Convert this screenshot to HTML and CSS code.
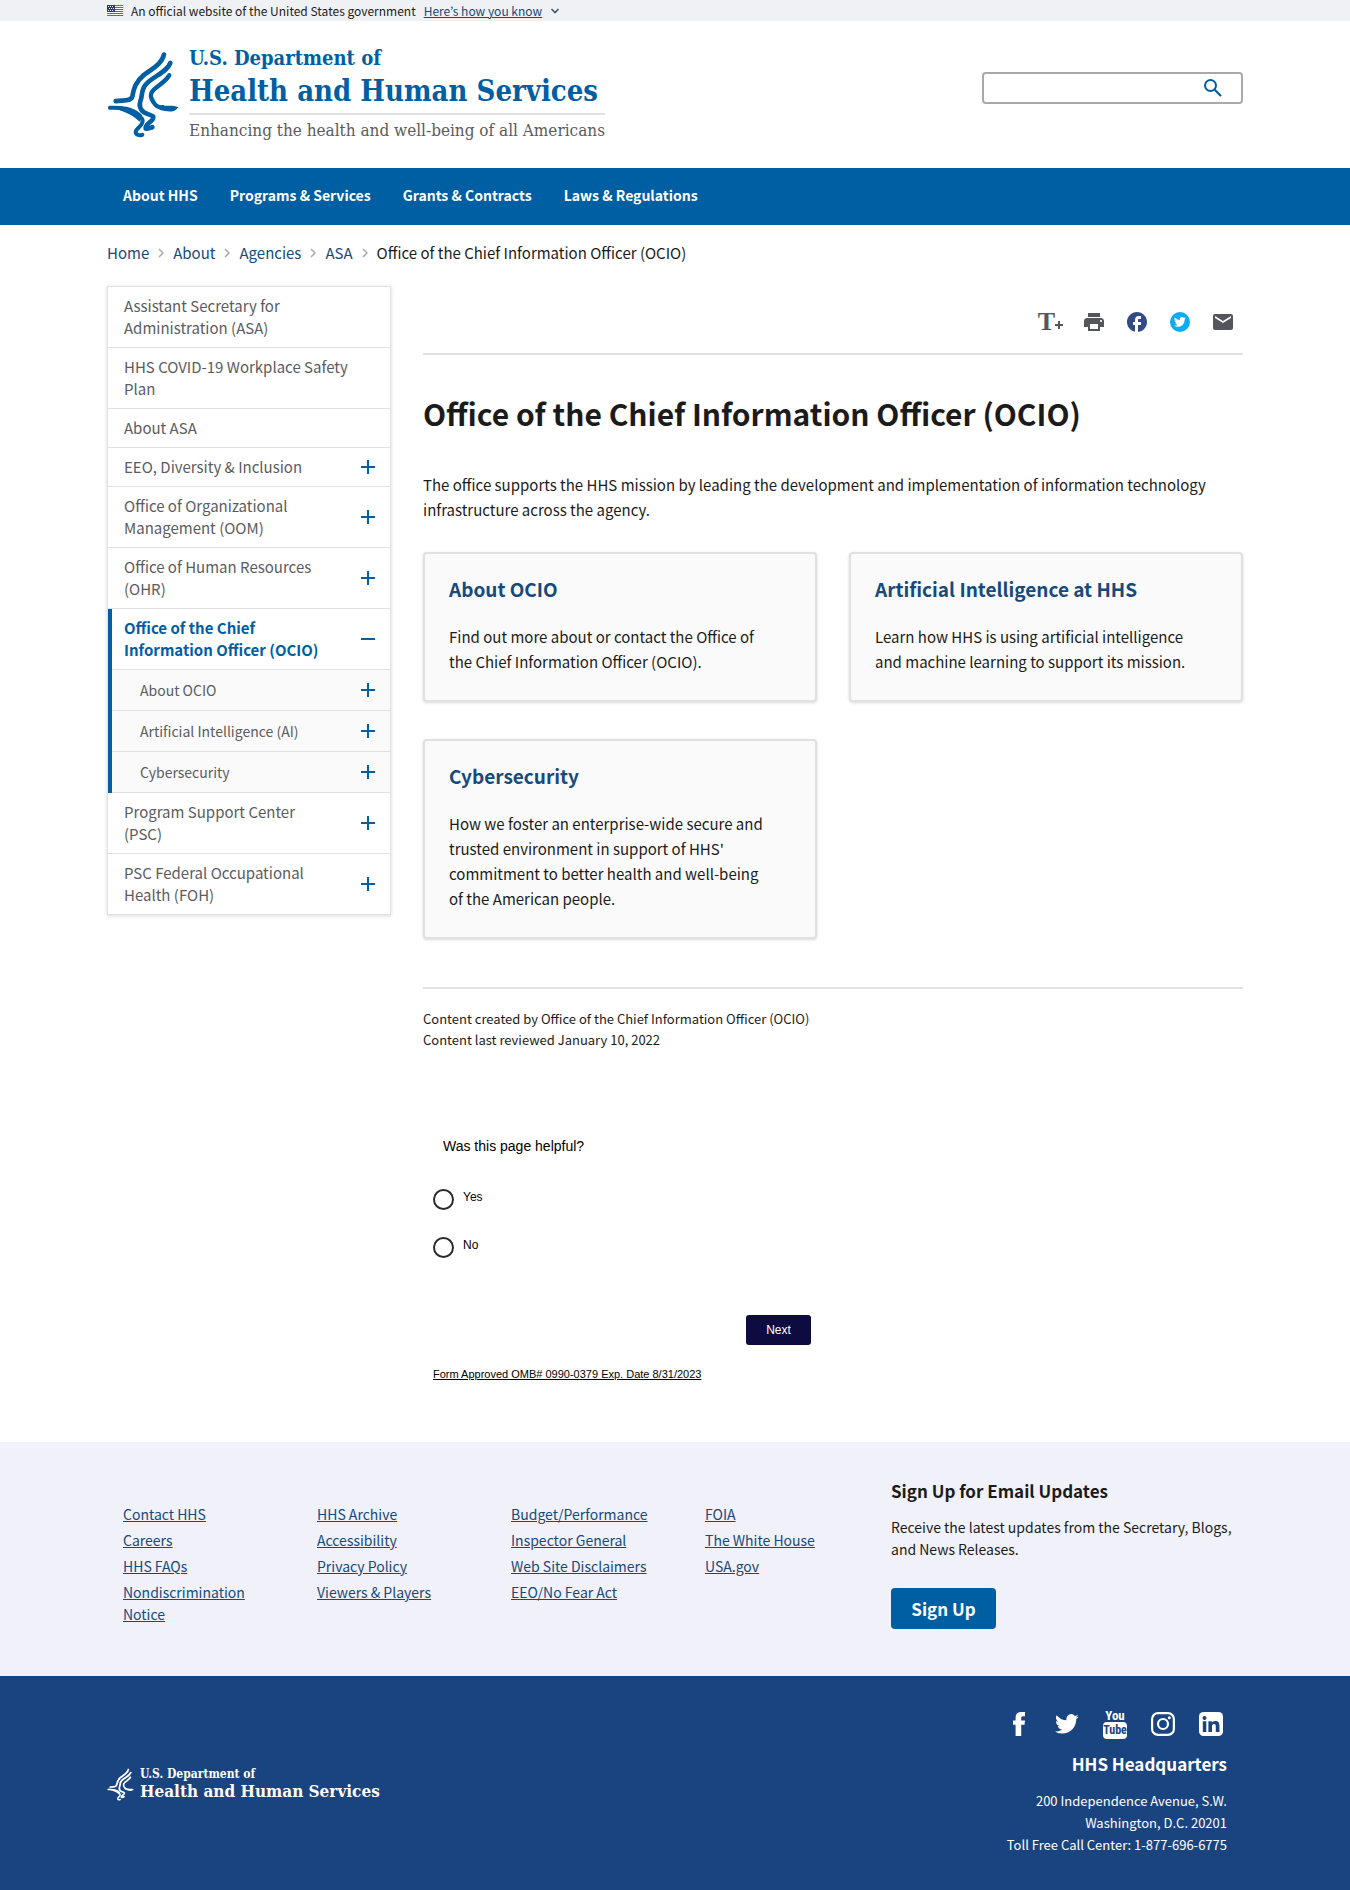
FILE: index.html
```html
<!DOCTYPE html>
<html lang="en">
<head>
<meta charset="utf-8">
<meta name="viewport" content="width=device-width, initial-scale=1">
<title>Office of the Chief Information Officer (OCIO) | HHS.gov</title>
<link rel="stylesheet" href="styles.css">
</head>
<body>
<svg class="defs" aria-hidden="true">
  <symbol id="eagle" viewBox="50 150 216 260">
    <g fill="none" stroke="currentColor" stroke-linecap="round" stroke-linejoin="round">
      <path stroke-width="14" d="M221 160C214 190 186 202 160 222C136 242 130 262 126 286C121 302 100 296 76 300"/>
      <path stroke-width="14" d="M240 185C230 212 196 222 170 246C150 264 158 282 150 300C145 316 150 326 162 334C180 345 196 340 186 356C176 366 164 372 166 382C174 384 180 380 186 378"/>
      <path stroke-width="13" d="M237 222C226 242 206 250 190 266C176 280 182 292 190 304C196 314 206 320 218 318"/>
      <path stroke-width="12" d="M59 320C84 318 110 322 132 336C150 348 160 352 156 364C152 378 138 380 136 392C136 402 148 404 156 401"/>
    </g>
    <path fill="currentColor" d="M208 314C226 316 244 310 264 318C252 336 232 332 208 326Z"/>
    <path fill="currentColor" d="M54 316C90 328 120 334 148 362L156 342C130 316 96 312 54 316Z"/>
  </symbol>
  <symbol id="plus" viewBox="0 0 14 14"><path fill="currentColor" d="M6 0h2v6h6v2H8v6H6V8H0V6h6z"/></symbol>
  <symbol id="minus" viewBox="0 0 14 14"><path fill="currentColor" d="M0 6h14v2H0z"/></symbol>
  <symbol id="chev" viewBox="0 0 6 10"><path fill="none" stroke="currentColor" stroke-width="1.5" d="M1 1l4 4-4 4"/></symbol>
  <symbol id="bird" viewBox="0 0 24 24"><path fill="currentColor" d="M23.6 4.6a9.7 9.7 0 0 1-2.8.8 4.9 4.9 0 0 0 2.1-2.7 9.7 9.7 0 0 1-3 1.2 4.8 4.8 0 0 0-8.3 4.4A13.7 13.7 0 0 1 1.700 3.200a4.800 4.800 0 0 0 1.500 6.500 4.800 4.800 0 0 1-2.200-.6v.1a4.800 4.800 0 0 0 3.900 4.700 4.800 4.800 0 0 1-2.200.1 4.800 4.800 0 0 0 4.500 3.400A9.700 9.700 0 0 1 0 19.400a13.700 13.700 0 0 0 7.400 2.200c8.900 0 13.800-7.400 13.800-13.800v-.6a9.800 9.800 0 0 0 2.400-2.600z"/></symbol>
</svg>

<div class="banner">
  <div class="container banner-row">
    <svg class="flag" viewBox="0 0 16 11" aria-hidden="true">
      <path fill="#fff" d="M0 0h16v11H0z"/>
      <path fill="#db3e1f" d="M0 0h16v1H0zM0 2h16v1H0zM0 4h16v1H0zM0 6h16v1H0zM0 8h16v1H0zM0 10h16v1H0z"/>
      <path fill="#1e33b1" d="M0 0h8v7H0z"/>
      <path fill="#fff" d="M1 1h1v1H1zM3 1h1v1H3zM5 1h1v1H5zM2 3h1v1H2zM4 3h1v1H4zM6 3h1v1H6zM1 5h1v1H1zM3 5h1v1H3zM5 5h1v1H5z"/>
    </svg>
    <span>An official website of the United States government</span>
    <a href="#how">Here’s how you know</a>
    <svg class="caret" viewBox="0 0 10 6" aria-hidden="true"><path fill="none" stroke="#44546a" stroke-width="1.600" d="M1.500 1l3.500 3.500L8.500 1"/></svg>
  </div>
</div>

<header class="container masthead">
  <a class="brand" href="#home">
    <svg class="brand-mark" aria-hidden="true"><use href="#eagle"/></svg>
    <span class="brand-text">
      <span class="brand-dept">U.S. Department of</span>
      <span class="brand-name">Health and Human Services</span>
      <span class="brand-tag">Enhancing the health and well-being of all Americans</span>
    </span>
  </a>
  <form class="search" role="search">
    <input type="search" aria-label="Search">
    <button type="submit" aria-label="Submit search">
      <svg viewBox="0 0 18 18" aria-hidden="true"><circle cx="6.500" cy="6.500" r="5.500" fill="none" stroke="currentColor" stroke-width="2"/><path d="M10.500 10.500L17 17" stroke="currentColor" stroke-width="2.200"/></svg>
    </button>
  </form>
</header>

<nav class="mainnav" aria-label="Primary">
  <ul class="container">
    <li><a href="#about">About HHS</a></li>
    <li><a href="#programs">Programs &amp; Services</a></li>
    <li><a href="#grants">Grants &amp; Contracts</a></li>
    <li><a href="#laws">Laws &amp; Regulations</a></li>
  </ul>
</nav>

<nav class="container" aria-label="Breadcrumb">
  <ol class="crumbs">
    <li><a href="#home">Home</a><svg aria-hidden="true"><use href="#chev"/></svg></li>
    <li><a href="#about">About</a><svg aria-hidden="true"><use href="#chev"/></svg></li>
    <li><a href="#agencies">Agencies</a><svg aria-hidden="true"><use href="#chev"/></svg></li>
    <li><a href="#asa">ASA</a><svg aria-hidden="true"><use href="#chev"/></svg></li>
    <li aria-current="page">Office of the Chief Information Officer (OCIO)</li>
  </ol>
</nav>

<div class="container columns">
  <nav class="sidenav" aria-label="Section">
    <ul>
      <li><div class="row"><a href="#a">Assistant Secretary for Administration (ASA)</a></div></li>
      <li><div class="row"><a href="#b">HHS COVID-19 Workplace Safety Plan</a></div></li>
      <li><div class="row"><a href="#c">About ASA</a></div></li>
      <li><div class="row"><a href="#d">EEO, Diversity &amp; Inclusion</a><button type="button" aria-label="Expand"><svg><use href="#plus"/></svg></button></div></li>
      <li><div class="row"><a href="#e">Office of Organizational Management (OOM)</a><button type="button" aria-label="Expand"><svg><use href="#plus"/></svg></button></div></li>
      <li><div class="row"><a href="#f">Office of Human Resources (OHR)</a><button type="button" aria-label="Expand"><svg><use href="#plus"/></svg></button></div></li>
      <li class="current"><div class="row"><a href="#g">Office of the Chief Information Officer (OCIO)</a><button type="button" aria-label="Collapse"><svg><use href="#minus"/></svg></button></div>
        <ul class="sub">
          <li><div class="row"><a href="#h">About OCIO</a><button type="button" aria-label="Expand"><svg><use href="#plus"/></svg></button></div></li>
          <li><div class="row"><a href="#i">Artificial Intelligence (AI)</a><button type="button" aria-label="Expand"><svg><use href="#plus"/></svg></button></div></li>
          <li><div class="row"><a href="#j">Cybersecurity</a><button type="button" aria-label="Expand"><svg><use href="#plus"/></svg></button></div></li>
        </ul>
      </li>
      <li><div class="row"><a href="#k">Program Support Center (PSC)</a><button type="button" aria-label="Expand"><svg><use href="#plus"/></svg></button></div></li>
      <li><div class="row"><a href="#l">PSC Federal Occupational Health (FOH)</a><button type="button" aria-label="Expand"><svg><use href="#plus"/></svg></button></div></li>
    </ul>
  </nav>

  <main>
    <div class="tools">
      <button type="button" class="resize" aria-label="Resize text"><span class="resize-t">T</span><svg viewBox="0 0 8 8" aria-hidden="true"><path fill="currentColor" d="M3 0h2v3h3v2H5v3H3V5H0V3h3z"/></svg></button>
      <button type="button" aria-label="Print"><svg viewBox="0 0 24 24"><path fill="currentColor" d="M19 8H5c-1.660 0-3 1.340-3 3v6h4v4h12v-4h4v-6c0-1.660-1.340-3-3-3zm-3 11H8v-5h8v5zm3-7c-.55 0-1-.45-1-1s.45-1 1-1 1 .45 1 1-.45 1-1 1zm-1-9H6v4h12V3z"/></svg></button>
      <a href="#facebook" aria-label="Share on Facebook"><svg class="fb" viewBox="0 0 24 24"><path fill="currentColor" d="M22 12c0-5.520-4.480-10-10-10S2 6.480 2 12c0 4.840 3.440 8.870 8 9.800V15H8v-3h2V9.500C10 7.570 11.570 6 13.500 6H16v3h-2c-.55 0-1 .45-1 1v2h3v3h-3v6.950c5.050-.5 9-4.760 9-9.950z"/></svg></a>
      <a href="#twitter" aria-label="Share on Twitter"><svg class="tw" viewBox="0 0 24 24"><circle cx="12" cy="12" r="10" fill="currentColor"/><use href="#bird" x="6" y="6" width="12" height="12" color="#fff"/></svg></a>
      <a href="#mail" aria-label="Share by email"><svg viewBox="0 0 24 24"><path fill="currentColor" d="M20 4H4c-1.100 0-2 .9-2 2v12c0 1.100.9 2 2 2h16c1.100 0 2-.9 2-2V6c0-1.100-.9-2-2-2zm0 4l-8 5-8-5V6l8 5 8-5v2z"/></svg></a>
    </div>
    <h1>Office of the Chief Information Officer (OCIO)</h1>
    <p class="lead">The office supports the HHS mission by leading the development and implementation of information technology infrastructure across the agency.</p>
    <div class="cards">
      <section class="card"><h2><a href="#h">About OCIO</a></h2><p>Find out more about or contact the Office of the Chief Information Officer (OCIO).</p></section>
      <section class="card"><h2><a href="#i">Artificial Intelligence at HHS</a></h2><p>Learn how HHS is using artificial intelligence and machine learning to support its mission.</p></section>
      <section class="card"><h2><a href="#j">Cybersecurity</a></h2><p>How we foster an enterprise-wide secure and trusted environment in support of HHS' commitment to better health and well-being of the American people.</p></section>
    </div>
    <div class="meta">
      <p>Content created by Office of the Chief Information Officer (OCIO)</p>
      <p>Content last reviewed January 10, 2022</p>
    </div>
    <form class="survey">
      <fieldset>
        <legend>Was this page helpful?</legend>
        <label><input type="radio" name="helpful" value="yes"><span>Yes</span></label>
        <label><input type="radio" name="helpful" value="no"><span>No</span></label>
      </fieldset>
      <button type="button">Next</button>
      <a href="#omb">Form Approved OMB# 0990-0379 Exp. Date 8/31/2023</a>
    </form>
  </main>
</div>

<footer>
  <div class="foot-top">
    <div class="container foot-grid">
      <ul>
        <li><a href="#1">Contact HHS</a></li>
        <li><a href="#2">Careers</a></li>
        <li><a href="#3">HHS FAQs</a></li>
        <li><a href="#4">Nondiscrimination Notice</a></li>
      </ul>
      <ul>
        <li><a href="#5">HHS Archive</a></li>
        <li><a href="#6">Accessibility</a></li>
        <li><a href="#7">Privacy Policy</a></li>
        <li><a href="#8">Viewers &amp; Players</a></li>
      </ul>
      <ul>
        <li><a href="#9">Budget/Performance</a></li>
        <li><a href="#10">Inspector General</a></li>
        <li><a href="#11">Web Site Disclaimers</a></li>
        <li><a href="#12">EEO/No Fear Act</a></li>
      </ul>
      <ul>
        <li><a href="#13">FOIA</a></li>
        <li><a href="#14">The White House</a></li>
        <li><a href="#15">USA.gov</a></li>
      </ul>
      <section class="signup">
        <h2>Sign Up for Email Updates</h2>
        <p>Receive the latest updates from the Secretary, Blogs, and News Releases.</p>
        <button type="button">Sign Up</button>
      </section>
    </div>
  </div>
  <div class="foot-bottom">
    <div class="container foot-row">
      <a class="foot-brand" href="#home">
        <svg aria-hidden="true"><use href="#eagle"/></svg>
        <span class="brand-text">
          <span class="foot-dept">U.S. Department of</span>
          <span class="foot-name">Health and Human Services</span>
        </span>
      </a>
      <div class="hq">
        <div class="social">
          <a href="#fb" aria-label="Facebook"><svg viewBox="0 0 24 24"><path fill="currentColor" d="M18 0v4.200h-2c-1.500 0-1.800.7-1.800 1.900V8.500H18l-.5 4.300h-3.300V24H8.600V12.800H6V8.500h2.600V5.600C8.600 2 10.600 0 14.200 0z"/></svg></a>
          <a href="#tw" aria-label="Twitter"><svg viewBox="0 0 24 24"><use href="#bird"/></svg></a>
          <a href="#yt" class="youtube" aria-label="YouTube"><span class="you">You</span><span class="tube">Tube</span></a>
          <a href="#ig" aria-label="Instagram"><svg viewBox="0 0 24 24"><g fill="none" stroke="currentColor" stroke-width="2.200"><rect x="1.100" y="1.100" width="21.800" height="21.800" rx="6"/><circle cx="12" cy="12" r="5"/></g><circle cx="18.300" cy="5.700" r="1.500" fill="currentColor"/></svg></a>
          <a href="#li" aria-label="LinkedIn"><svg viewBox="0 0 24 24"><rect width="24" height="24" rx="4.500" fill="currentColor"/><path fill="#1a4480" d="M3.800 9.300h3.500V20H3.800zM5.500 3.900a2 2 0 1 1 0 4 2 2 0 0 1 0-4zM9.400 9.300h3.400v1.500c.6-1 1.700-1.800 3.400-1.800 3.200 0 4.200 2 4.200 4.900V20h-3.600v-5.400c0-1.500-.3-2.700-1.800-2.700s-2 1.200-2 2.600V20H9.400z"/></svg></a>
        </div>
        <h2>HHS Headquarters</h2>
        <address>200 Independence Avenue, S.W.<br>Washington, D.C. 20201<br>Toll Free Call Center: 1-877-696-6775</address>
      </div>
    </div>
  </div>
</footer>
</body>
</html>
```
FILE: styles.css
```css
:root {
  --blue: #005ea2;
  --navy: #1a4480;
  --link: #164a7c;
  --ink: #1b1b1b;
  --gray: #5a5c61;
  --line: #dfe1e2;
  --sans: "Noto Sans CJK KR", "Open Sans", sans-serif;
  --serif: "DejaVu Serif Condensed", "DejaVu Serif", serif;
  --form: "Liberation Sans", Arial, sans-serif;
}
* { box-sizing: border-box; }
body { margin: 0; font: 15px/22px var(--sans); color: var(--ink); background: #fff; }
ul, ol { list-style: none; margin: 0; padding: 0; }
h1, h2, p { margin: 0; }
a { color: var(--link); }
button { font: inherit; border: 0; background: none; padding: 0; color: inherit; cursor: pointer; }
svg { display: block; }
.defs { display: none; }
.container { max-width: 1200px; margin: 0 auto; padding: 0 32px; }

.banner { background: #f0f1f5; font-size: 12px; line-height: 21px; }
.banner-row { display: flex; align-items: center; gap: 8px; }
.flag { width: 16px; height: 11px; }
.caret { width: 10px; height: 6px; }

.masthead { display: flex; justify-content: space-between; align-items: center; padding-top: 24px; padding-bottom: 24px; }
.brand { display: flex; gap: 10px; color: var(--blue); text-decoration: none; align-items: center; }
.brand-mark { width: 72px; height: 87px; }
.brand-text { display: flex; flex-direction: column; font-family: var(--serif); font-weight: 700; white-space: nowrap; }
.brand-dept { font-size: 20px; line-height: 27px; }
.brand-name { font-size: 29px; line-height: 38px; padding-bottom: 3px; border-bottom: 2px solid var(--line); }
.brand-tag { font-size: 17px; line-height: 27px; font-weight: 400; color: #5b5b5b; padding-top: 2px; }
.search { display: flex; width: 261px; height: 32px; border: 2px solid #a9a9a9; border-radius: 4px; margin-bottom: 14px; }
.search input { flex: 1; min-width: 0; border: 0; background: none; outline: 0; font: inherit; }
.search button { width: 56px; display: grid; place-items: center; color: var(--blue); }
.search svg { width: 18px; height: 18px; }

.mainnav { background: var(--blue); }
.mainnav ul { display: flex; }
.mainnav a { display: block; padding: 16px 16px 19px; color: #fff; font-weight: 700; font-size: 14px; line-height: 22px; text-decoration: none; }

.crumbs { display: flex; padding: 17px 0 22px; }
.crumbs li { display: flex; align-items: center; }
.crumbs a { text-decoration: none; }
.crumbs svg { width: 6px; height: 10px; margin: 0 9px; color: #a9a9a9; }

.columns { display: grid; grid-template-columns: 284px 1fr; gap: 32px; align-items: start; }
.sidenav { border: 1px solid var(--line); box-shadow: 0 1px 4px rgba(0, 0, 0, .15); border-bottom: 0; }
.row { display: flex; align-items: center; border-bottom: 1px solid var(--line); padding: 8px 15px 8px 16px; }
.row a { flex: 1; color: var(--gray); text-decoration: none; padding-right: 16px; }
.row button { width: 14px; height: 14px; margin-left: 16px; color: var(--blue); }
.row svg { width: 14px; height: 14px; }
.current { border-left: 4px solid var(--blue); }
.current .row { padding-left: 12px; }
.current > .row a { color: var(--blue); font-weight: 700; }
.current .sub .row { padding-left: 28px; background: #fafafb; }
.sub .row a { font-size: 14px; line-height: 24px; }

main { min-width: 0; }
.tools { display: flex; justify-content: flex-end; align-items: center; gap: 19px; color: #54565c; padding: 24px 8px 19px 0; border-bottom: 2px solid var(--line); }
.tools a { color: inherit; }
.tools svg { width: 24px; height: 24px; }
.tools .fb { color: #324a85; }
.tools .tw { color: #0bacf0; }
.resize { display: flex; align-items: flex-end; height: 24px; }
.resize-t { font: 700 26px/24px "Liberation Serif", serif; }
.tools .resize svg { width: 8px; height: 8px; margin-bottom: 5px; }
h1 { font-size: 30px; line-height: 38px; padding: 39px 0 40px; }
.lead { line-height: 25px; }
.cards { display: grid; grid-template-columns: 1fr 1fr; gap: 37px 32px; margin: 30px 0 48px; }
.card { background: #fafafa; border: 2px solid var(--line); border-radius: 4px; box-shadow: 0 1px 3px rgba(0, 0, 0, .15); padding: 21px 46px 26px 24px; }
.card h2 { font-size: 19px; line-height: 28px; margin-bottom: 21px; }
.card h2 a { text-decoration: none; }
.card p { line-height: 25px; }
.meta { border-top: 2px solid var(--line); padding-top: 19px; font-size: 13px; line-height: 21px; }

.survey { display: flex; flex-direction: column; align-items: flex-start; width: 388px; max-width: 100%; padding: 88px 0 60px 10px; font: 12px/16px var(--form); color: #000; }
.survey fieldset { border: 0; margin: 0; padding: 0; }
.survey legend { font-size: 14px; padding: 0 10px; margin-bottom: 35px; }
.survey label { display: flex; gap: 9px; margin-bottom: 27px; }
.survey input { appearance: none; width: 21px; height: 21px; margin: 0; border: 2px solid #2b2b2b; border-radius: 50%; }
.survey input:checked { box-shadow: inset 0 0 0 3px #fff; background: #2b2b2b; }
.survey button { align-self: flex-end; width: 65px; height: 30px; background: #0d0b3f; color: #fff; border-radius: 3px; margin: 30px 0 21px; }
.survey a { color: #000; font-size: 11px; }

.foot-top { background: #f1f1f9; }
.foot-grid { display: grid; grid-template-columns: repeat(4, 194px) 1fr; padding-top: 35px; padding-bottom: 47px; }
.foot-grid ul { padding: 26px 64px 0 16px; font-size: 14px; }
.foot-grid ul + ul { padding-right: 8px; }
.foot-grid li { margin-bottom: 4px; }
.signup { padding-left: 8px; font-size: 14px; }
.signup h2 { font-size: 17px; line-height: 28px; margin-bottom: 11px; }
.signup button { margin-top: 28px; width: 105px; height: 41px; border-radius: 4px; background: var(--blue); color: #fff; font-size: 17px; font-weight: 700; }

.foot-bottom { background: var(--navy); color: #fff; }
.foot-bottom a { color: #fff; text-decoration: none; }
.foot-row { display: flex; justify-content: space-between; align-items: center; padding-top: 36px; padding-bottom: 34px; }
.foot-brand { display: flex; align-items: center; gap: 6px; }
.foot-brand svg { width: 27px; height: 33px; }
.foot-dept { font-size: 12px; line-height: 14px; }
.foot-name { font-size: 17px; line-height: 20px; }
.hq { text-align: right; padding-right: 16px; }
.social { display: flex; justify-content: flex-end; align-items: center; gap: 24px; height: 24px; padding-right: 4px; }
.social svg { width: 24px; height: 24px; }
.youtube { width: 24px; display: flex; flex-direction: column; align-items: center; font: 700 13px/13px "Roboto Condensed", "Liberation Sans", sans-serif; }
.tube { background: #fff; color: var(--navy); border-radius: 4px; width: 24px; text-align: center; font-size: 12px; line-height: 17px; }
.hq h2 { font-size: 17px; line-height: 24px; margin: 16px 0 14px; }
address { font-size: 13px; font-style: normal; }
```
